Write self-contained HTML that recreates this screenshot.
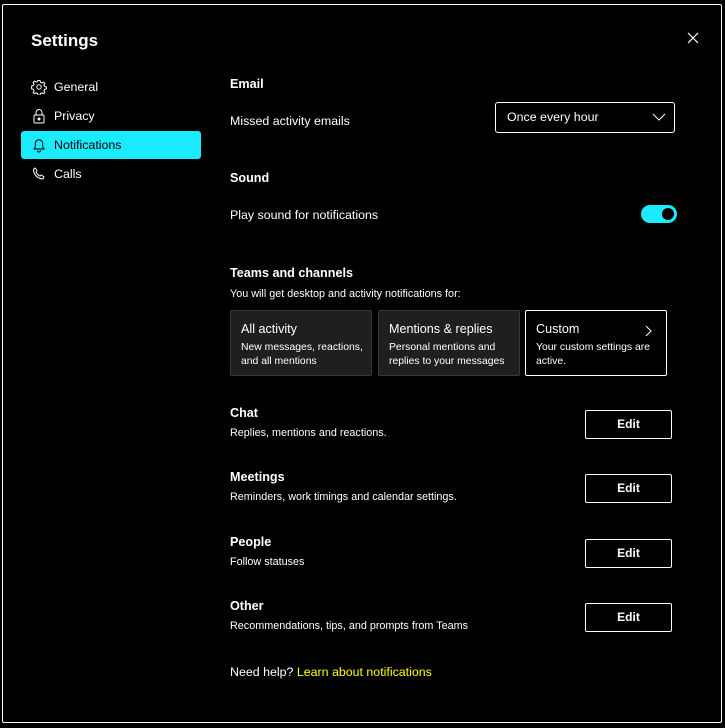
<!DOCTYPE html>
<html><head><meta charset="utf-8">
<style>
*{box-sizing:border-box;margin:0;padding:0}
body{width:725px;height:728px;background:#000;color:#fff;font-family:"Segoe UI","Liberation Sans",sans-serif;position:relative;overflow:hidden;font-size:12.4px}
.dlg{position:absolute;left:2px;top:4px;width:720px;height:719px;border:1px solid #fff;border-radius:2px}
.a{position:absolute;white-space:nowrap}
.title{left:31px;top:31px;font-size:17px;font-weight:bold}
.nav{left:21px;width:180px;height:28px;border-radius:3px;font-size:12.4px;padding-left:33px;line-height:29px}
.nav svg{position:absolute;left:10px;top:6px}
.sel{background:#1aebff;color:#000}
.h{font-weight:bold;font-size:12.6px}
.s{font-size:10.8px}
.card{position:absolute;top:310px;width:142px;height:66px;background:#1f1f1f;border:1px solid #3a3a3a;border-radius:2px;padding:11px 0 0 10px}
.card .t{font-size:12.6px;margin-bottom:5px}
.card .d{font-size:10.4px;line-height:14px}
.btn{position:absolute;left:585px;width:87px;height:29px;border:1.5px solid #fff;border-radius:2px;text-align:center;line-height:27px;font-weight:bold;font-size:12px}
</style></head><body>
<div class="dlg"></div>
<div class="a title">Settings</div>
<svg class="a" style="left:687px;top:32px" width="12" height="12" viewBox="0 0 12 12"><path d="M1 1L11 11M11 1L1 11" stroke="#fff" stroke-width="1.2"/></svg>

<div class="a nav" style="top:73px"><svg width="16" height="16" viewBox="0 0 16 16" fill="none" stroke="#fff" stroke-width="1"><circle cx="8" cy="8" r="2.2"/><path d="M7 1.5h2l.4 1.8 1.5.7 1.6-1 1.4 1.4-1 1.6.7 1.5 1.8.4v2l-1.8.4-.7 1.5 1 1.6-1.4 1.4-1.6-1-1.5.7-.4 1.8H7l-.4-1.8-1.5-.7-1.6 1-1.4-1.4 1-1.6-.7-1.5-1.8-.4V7l1.8-.4.7-1.5-1-1.6 1.4-1.4 1.6 1 1.5-.7z"/></svg>General</div>
<div class="a nav" style="top:102px"><svg width="16" height="16" viewBox="0 0 16 16" fill="none" stroke="#fff" stroke-width="1"><rect x="3" y="7" width="10" height="8" rx="1"/><path d="M5 7V4.5a3 3 0 016 0V7"/><circle cx="8" cy="11" r="1" fill="#fff"/></svg>Privacy</div>
<div class="a nav sel" style="top:131px"><svg width="16" height="16" viewBox="0 0 16 16" fill="none" stroke="#000" stroke-width="1"><path d="M3 12h10l-1.3-2V6.5a3.7 3.7 0 00-7.4 0V10z"/><path d="M6.5 13.5a1.5 1.5 0 003 0"/></svg>Notifications</div>
<div class="a nav" style="top:160px"><svg width="16" height="16" viewBox="0 0 16 16" fill="none" stroke="#fff" stroke-width="1"><path d="M4 2l2 2.5-1 1.5c.8 1.8 2.2 3.2 4 4l1.5-1 2.5 2-1 2c-5 0-9.5-4.5-9.5-9.5z"/></svg>Calls</div>

<div class="a h" style="left:230px;top:77px">Email</div>
<div class="a" style="left:230px;top:114px">Missed activity emails</div>
<div class="a" style="left:495px;top:102px;width:180px;height:31px;border:1px solid #fff;border-radius:3px;padding:7px 0 0 11px">Once every hour
<svg style="position:absolute;right:8px;top:10px" width="14" height="9" viewBox="0 0 14 9"><path d="M1 1l6 6 6-6" stroke="#fff" fill="none" stroke-width="1"/></svg></div>

<div class="a h" style="left:230px;top:171px">Sound</div>
<div class="a" style="left:230px;top:208px">Play sound for notifications</div>
<div class="a" style="left:641px;top:205px;width:36px;height:18px;border-radius:9px;background:#1aebff"><div style="position:absolute;right:3px;top:3px;width:12px;height:12px;border-radius:50%;background:#000"></div></div>

<div class="a h" style="left:230px;top:266px">Teams and channels</div>
<div class="a s" style="left:230px;top:288px">You will get desktop and activity notifications for:</div>
<div class="card" style="left:230px"><div class="t">All activity</div><div class="d">New messages, reactions,<br>and all mentions</div></div>
<div class="card" style="left:378px"><div class="t">Mentions &amp; replies</div><div class="d">Personal mentions and<br>replies to your messages</div></div>
<div class="card" style="left:525px;background:#000;border:1px solid #fff"><div class="t">Custom</div><div class="d">Your custom settings are<br>active.</div>
<svg style="position:absolute;right:14px;top:14px" width="7" height="12" viewBox="0 0 7 12"><path d="M1 1l5 5-5 5" stroke="#fff" fill="none" stroke-width="1"/></svg></div>

<div class="a h" style="left:230px;top:406px">Chat</div>
<div class="a s" style="left:230px;top:427px">Replies, mentions and reactions.</div>
<div class="btn" style="top:410px">Edit</div>
<div class="a h" style="left:230px;top:470px">Meetings</div>
<div class="a s" style="left:230px;top:491px">Reminders, work timings and calendar settings.</div>
<div class="btn" style="top:474px">Edit</div>
<div class="a h" style="left:230px;top:535px">People</div>
<div class="a s" style="left:230px;top:556px">Follow statuses</div>
<div class="btn" style="top:539px">Edit</div>
<div class="a h" style="left:230px;top:599px">Other</div>
<div class="a s" style="left:230px;top:620px">Recommendations, tips, and prompts from Teams</div>
<div class="btn" style="top:603px">Edit</div>

<div class="a" style="left:230px;top:665px">Need help? <span style="color:#ffff00">Learn about notifications</span></div>
</body></html>
